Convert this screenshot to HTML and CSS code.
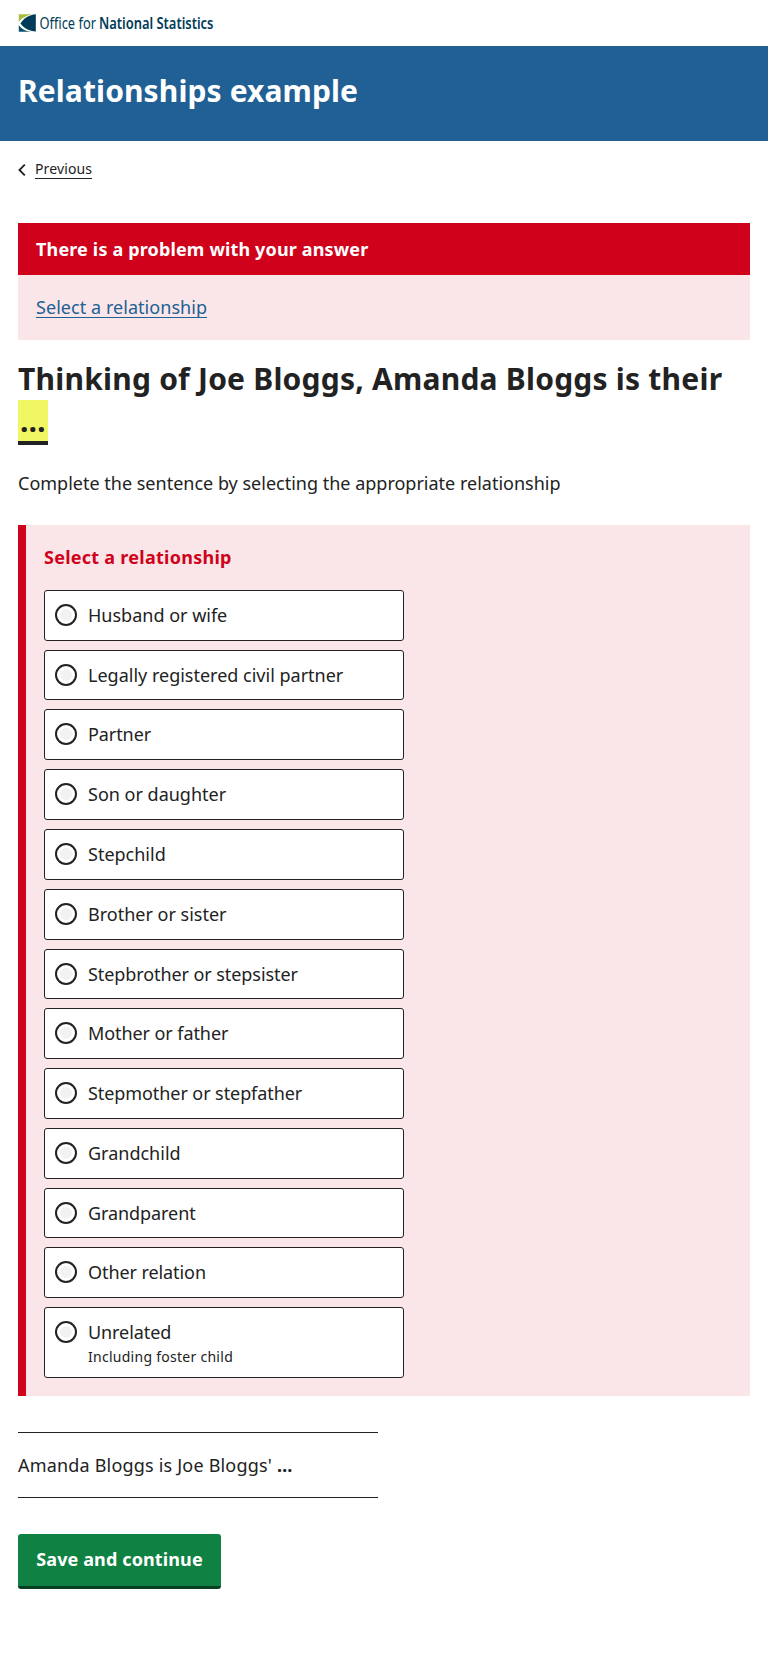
FILE: index.html
```html
<!DOCTYPE html>
<html lang="en">
<head>
<meta charset="utf-8">
<title>Relationships example</title>
<link rel="stylesheet" href="styles.css">
</head>
<body>
<header>
  <div class="brand">
    <svg class="logo" width="220" height="24" viewBox="0 0 220 24" role="img" aria-label="Office for National Statistics">
      <path fill="#a8bd3a" d="M0.800 1.200H14C8 2.500 3.500 5 0.800 9Z"/>
      <path fill="#003c57" d="M17.800 1.200V18.500C11 18 6 15.500 2.500 10.500C6 5 11 1.800 17.800 1.200Z"/>
      <path fill="#0d5068" d="M0.800 12C3 15.500 7 18 13 18.800H0.800Z"/>
      <text class="logo-text" transform="translate(21.500 15.600) scale(0.83 1)">Office for</text>
      <text class="logo-text logo-bold" transform="translate(81 15.600) scale(0.834 1)">National Statistics</text>
    </svg>
  </div>
  <div class="title-bar"><div class="title">Relationships example</div></div>
</header>
<div class="page">
  <nav class="previous">
    <svg width="8" height="12" viewBox="0 0 8 12"><path d="M6.800 0.600L1.400 6L6.800 11.400" fill="none" stroke="#222" stroke-width="1.800"/></svg>
    <a href="#">Previous</a>
  </nav>
  <main>
    <section class="summary">
      <h2 class="summary-head">There is a problem with your answer</h2>
      <div class="summary-body"><a href="#answers">Select a relationship</a></div>
    </section>
    <h1 class="question">Thinking of Joe Bloggs, Amanda Bloggs is their <em class="highlight">…</em></h1>
    <p class="lead">Complete the sentence by selecting the appropriate relationship</p>
    <section class="error-panel" id="answers">
      <p class="error-text">Select a relationship</p>
      <div class="options">
        <label class="option"><input type="radio" name="rel"><span>Husband or wife</span></label>
        <label class="option"><input type="radio" name="rel"><span>Legally registered civil partner</span></label>
        <label class="option tight"><input type="radio" name="rel"><span>Partner</span></label>
        <label class="option"><input type="radio" name="rel"><span>Son or daughter</span></label>
        <label class="option"><input type="radio" name="rel"><span>Stepchild</span></label>
        <label class="option"><input type="radio" name="rel"><span>Brother or sister</span></label>
        <label class="option tight"><input type="radio" name="rel"><span>Stepbrother or stepsister</span></label>
        <label class="option tight"><input type="radio" name="rel"><span>Mother or father</span></label>
        <label class="option tight"><input type="radio" name="rel"><span>Stepmother or stepfather</span></label>
        <label class="option"><input type="radio" name="rel"><span>Grandchild</span></label>
        <label class="option tight"><input type="radio" name="rel"><span>Grandparent</span></label>
        <label class="option tight"><input type="radio" name="rel"><span>Other relation</span></label>
        <label class="option option-last tight"><input type="radio" name="rel"><span>Unrelated<small>Including foster child</small></span></label>
      </div>
    </section>
    <p class="playback">Amanda Bloggs is Joe Bloggs' <strong>…</strong></p>
    <button class="submit" type="button">Save and continue</button>
  </main>
</div>
</body>
</html>
```
FILE: styles.css
```css
* { box-sizing: border-box; }
body {
  margin: 0;
  background: #fff;
  color: #222;
  font-family: "Noto Sans", sans-serif;
  font-size: 18px;
  line-height: 28.8px;
}
h1, h2, p { margin: 0; }
.brand { height: 46px; padding: 13px 18px 0; }
.logo { display: block; overflow: visible; }
.logo-text { font-size: 15.5px; fill: #003c57; }
.logo-bold { font-weight: 600; }
.title-bar { height: 95px; padding: 24px 18px 0; background: #206095; }
.title { color: #fff; font-size: 30px; font-weight: 700; line-height: 42px; letter-spacing: 0.11px; }
.page { padding: 0 18px; }
.previous { display: flex; align-items: center; gap: 9px; height: 57px; font-size: 14px; line-height: 19px; letter-spacing: 0.13px; }
.previous a { border-bottom: 1px solid #222; color: #222; text-decoration: none; line-height: 18px; }
.summary { margin-top: 25px; background: #fae6e8; }
.summary-head { padding: 12px 18px; height: 52px; background: #d0021b; color: #fff; font-size: 18px; line-height: 28.8px; letter-spacing: 0.15px; }
.summary-body { padding: 18px; height: 65px; letter-spacing: 0.05px; }
.summary-body a { color: #206095; text-decoration: underline; text-underline-offset: 3px; text-decoration-skip-ink: none; text-decoration-thickness: 1px; }
.question { margin-top: 18px; font-size: 30px; font-weight: 700; line-height: 42px; letter-spacing: 0.226px; }
.highlight { padding: 0 1.9px; border-bottom: 4px solid #222; background: #f0f762; font-style: normal; }
.lead { margin-top: 27px; }
.error-panel { margin-top: 27px; height: 871.2px; padding: 18px; border-left: 8px solid #d0021b; background: #fae6e8; }
.error-text { color: #d0021b; font-weight: 700; letter-spacing: 0.26px; }
.options { display: flex; flex-direction: column; gap: 9px; width: 360px; margin-top: 18.23px; }
.option { display: flex; align-items: flex-start; height: 50.79px; padding: 10px; border: 1px solid #222; border-radius: 3px; background: #fff; }
.option input { appearance: none; flex: none; width: 22px; height: 22px; margin: 3px 11px 0 0; border: 2px solid #222; border-radius: 50%; background: #f2f2f2; box-shadow: inset 0 0 0 3px #fff; }
.tight { letter-spacing: -0.08px; }
.option-last { height: 71px; }
.option small { display: block; font-size: 14px; line-height: 19.6px; letter-spacing: 0.27px; }
.playback { width: 360px; height: 66px; margin-top: 36px; padding: 17.6px 0; border-top: 1px solid #222; border-bottom: 1px solid #222; letter-spacing: 0.19px; }
.submit { display: block; width: 203px; height: 55px; margin-top: 36px; padding: 0 0 4px; border: 0; border-radius: 3px; background: linear-gradient(#0f8243 52px, #073d20 52px); color: #fff; font: 700 18px "Noto Sans", sans-serif; letter-spacing: 0.12px; }
```
